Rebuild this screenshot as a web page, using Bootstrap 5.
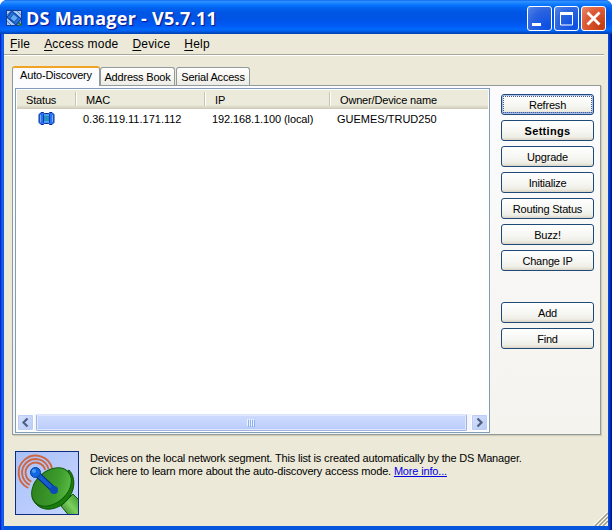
<!DOCTYPE html>
<html lang="en">
<head>
<meta charset="utf-8">
<title>DS Manager - V5.7.11</title>
<link href="https://cdn.jsdelivr.net/npm/bootstrap@5.3.0/dist/css/bootstrap.min.css" rel="stylesheet">
<style>
html,body{height:530px;overflow:hidden}
body{font:11px/13px "Liberation Sans",Arial,sans-serif;letter-spacing:-.165px;color:#000;background:#fff}
.win{width:612px;height:530px;border-radius:7px 7px 0 0;padding:0 4px 4px;
 background:linear-gradient(90deg,#0019cf 0,#0831d9 1px,#166aee 2px,#0855dd 4px,#0855dd 608px,#0441d8 609px,#001ea0 611px,#00138c)}
.titlebar{height:34px;margin:0 -4px;padding:2px 6px 0 6px;border-radius:7px 7px 0 0;background:linear-gradient(#0058ee 0,#3593ff 1px,#288eff 2px,#127dff 4px,#036ffc 6px,#0262ee 8px,#0057e5 12px,#0054e3 18px,#0055eb 21px,#005bf5 26px,#026afe 29px,#0062ef 31px,#0052d6 32px,#0040ab 34px)}
.caption{font:bold 18px/32px "Open Sans",sans-serif;letter-spacing:.27px;color:#fff;text-shadow:1px 1px 1px #0f1089;white-space:nowrap;margin-left:4px}
.ctl{width:25px;height:25px;padding:0;border:1px solid #fff;border-radius:3px;background:radial-gradient(circle at 85% 85%,#0a4fe4 0,#2b63e0 60%,#4479e4 85%,#8fb0f2 120%)}
.ctl-close{background:radial-gradient(circle at 85% 85%,#c43b12 0,#dc5a35 60%,#e4785a 85%,#f5b49c 120%)}
.ctl svg,.glyph{display:block}
.client{height:492px;background:#ece9d8;overflow:hidden}
.menu{height:20px;padding-left:6px;gap:14px;font-size:12px;line-height:20px;letter-spacing:.2px}
.rule{height:2px;margin-right:4px;border-top:1px solid #aca899;background:#fff}
.tabs{height:19px;margin:10px 0 0 8px;align-items:flex-end}
.tabx{border:1px solid #919b9c;border-bottom:0;border-radius:3px 3px 0 0;background:linear-gradient(#fff,#f5f4ee 60%,#ecebe6);height:18px;line-height:19px;letter-spacing:-.2px;text-align:center;white-space:nowrap}
.tab-on{width:88px;height:20px;line-height:15px;border-top:2px solid #f0a325;background:#fcfcfe;margin-bottom:-1px;position:relative;z-index:1}
.panel{width:589px;height:350px;margin-left:8px;padding:2px 6px 1px 2px;border:1px solid #919b9c;background:linear-gradient(#fcfcfe,#f4f3ee);box-shadow:1px 1px 1px #cfccb9}
.list{width:475px;height:345px;border:1px solid #7f9db9;background:#fff;padding:1px}
.cols{display:grid;grid-template-columns:59px 129px 125px 1fr}
.lhead{height:19px;line-height:20px;background:linear-gradient(#ebeadb 0,#ebeadb 15px,#e2dfcb 16px,#d6d2c2 18px,#cbc7b8 19px)}
.lhead span{padding-left:9px;border-left:1px solid #fff;box-shadow:-1px 0 #c7c5b2;height:14px;margin-top:2px;line-height:16px}
.lhead span:first-child{border:0;box-shadow:none}
.lrow{height:18px;line-height:20px;letter-spacing:0}
.sbar{height:17px;background:#f5f5fb}
.sbtn{width:17px;height:17px;border:1px solid #fff;border-radius:2px;background:linear-gradient(135deg,#d5e0fd,#b9cbf5);box-shadow:inset 0 0 0 1px #bccdf8}
.thumb{height:17px;margin:0 4px 0 2px;border:1px solid #9fb5e0;border-top-color:#dbe4fc;border-radius:2px;background:linear-gradient(#cddafd,#c1d2fc 70%,#b5c8f6);box-shadow:inset 0 0 0 1px #dfe8ff}
.side{width:93px;padding-top:6px;gap:5px}
.xpb{display:block;height:21px;width:93px;padding:0;border:1px solid #1f4a78;border-radius:3px;background:linear-gradient(#fff,#f5f5f1 60%,#eeede5 85%,#d9d3c6);color:#000;font-size:11px;line-height:20px;letter-spacing:-.2px;text-align:center}
.xpb:hover{color:#000}
.xpb-focus{box-shadow:inset 0 0 0 1px #a9bff0,inset 0 -2px #8aa5e5;position:relative}
.xpb-focus::after{content:"";position:absolute;inset:1px;border:1px dotted #4a5b8c}
.info{padding:16px 0 0 11px;gap:11px}
.more{color:#0000e0;text-decoration:underline}
.grip{position:absolute;right:4px;bottom:4px}
u{text-underline-offset:2px}
</style>
</head>
<body>
<div class="win position-relative">
 <div class="titlebar d-flex align-items-center">
  <svg width="16" height="17" viewBox="0 0 16 17"><rect width="15" height="15" x=".5" y=".5" fill="#a9cbf8" stroke="#143f94"/><path d="M1 5l4-4M11 15l4-4M11 1l4 4M1 11l4 4" stroke="#4c83d8" fill="none"/><g transform="rotate(40 8 8)"><rect x="2" y="4" width="12" height="8" rx="1" fill="#2375e2" stroke="#063a9f"/><rect x="5" y="5" width="6" height="6" fill="#65adf2" stroke="#1d59bd"/></g><path d="M13 16l-1-3 2-1 2 4z" fill="#1c7c34"/></svg>
  <span class="caption me-auto">DS Manager - V5.7.11</span>
  <div class="d-flex" style="gap:2px">
   <button class="ctl" aria-label="Minimize"><svg width="23" height="23"><path d="M4 17.500h9" stroke="#fff" stroke-width="3"/></svg></button>
   <button class="ctl" aria-label="Maximize"><svg width="23" height="23"><path d="M5.500 6v12h12V6" fill="none" stroke="#fff"/><path d="M5 6.500h13" stroke="#fff" stroke-width="3"/></svg></button>
   <button class="ctl ctl-close" aria-label="Close"><svg width="23" height="23"><path d="M5.500 5.500l12 12M17.500 5.500l-12 12" stroke="#fff" stroke-width="2.800"/></svg></button>
  </div>
 </div>
 <div class="client">
  <nav class="menu d-flex"><span><u>F</u>ile</span><span><u>A</u>ccess mode</span><span><u>D</u>evice</span><span><u>H</u>elp</span></nav>
  <div class="rule"></div>
  <div class="tabs d-flex">
   <div class="tabx tab-on">Auto-Discovery</div>
   <div class="tabx" style="width:75px">Address Book</div>
   <div class="tabx" style="width:74px;margin-left:1px">Serial Access</div>
  </div>
  <div class="panel d-flex justify-content-between">
   <div class="list d-flex flex-column">
    <div class="lhead cols"><span>Status</span><span>MAC</span><span>IP</span><span>Owner/Device name</span></div>
    <div class="lrow cols">
     <div><svg class="glyph" style="margin:3px 0 0 21px" width="17" height="13" viewBox="0 0 17 13"><path d="M3 .5h2.500l1 1h4l1-1H14l2 2v8l-2 2h-2.500l-1-1h-4l-1 1H3l-2-2v-8z" fill="#2c72ee" stroke="#0a2e9c"/><path d="M2.500 3v7M14.500 3v7" stroke="#6cb0ff"/><path d="M5.500 2v9M11.500 2v9" stroke="#0b3fbe"/><path d="M6.500 4h4v5h-4z" fill="#2298b8"/><path d="M6 3h5M6 10h5" stroke="#74c8f5"/></svg></div>
     <div style="padding-left:7px">0.36.119.11.171.112</div>
     <div style="padding-left:7px;letter-spacing:-.1px">192.168.1.100 (local)</div>
     <div style="padding-left:7px">GUEMES/TRUD250</div>
    </div>
    <div class="sbar mt-auto d-flex">
     <div class="sbtn"><svg class="glyph" width="15" height="15"><path d="M9.500 3.500l-4 4 4 4" fill="none" stroke="#4d6185" stroke-width="2.200"/></svg></div>
     <div class="thumb flex-grow-1 d-flex justify-content-center align-items-center"><svg width="9" height="8"><path d="M.5 0v7M2.500 0v7M4.500 0v7M6.500 0v7" stroke="#eef4fe"/><path d="M1.500 1v7M3.500 1v7M5.500 1v7M7.500 1v7" stroke="#8cb0f8"/></svg></div>
     <div class="sbtn"><svg class="glyph" width="15" height="15"><path d="M5.500 3.500l4 4-4 4" fill="none" stroke="#4d6185" stroke-width="2.200"/></svg></div>
    </div>
   </div>
   <div class="side d-flex flex-column">
    <button class="xpb xpb-focus">Refresh</button>
    <button class="xpb fw-bold" style="letter-spacing:.3px">Settings</button>
    <button class="xpb">Upgrade</button>
    <button class="xpb">Initialize</button>
    <button class="xpb">Routing Status</button>
    <button class="xpb">Buzz!</button>
    <button class="xpb">Change IP</button>
    <button class="xpb" style="margin-top:26px">Add</button>
    <button class="xpb">Find</button>
   </div>
  </div>
  <div class="info d-flex">
   <svg width="64" height="64" viewBox="0 0 64 64">
    <defs>
     <linearGradient id="sky" x1="0" y1="0" x2="1" y2="1"><stop offset="0" stop-color="#a9c0f8"/><stop offset="1" stop-color="#c6d6ff"/></linearGradient>
     <linearGradient id="dish" x1="0" y1="0" x2="1" y2="1"><stop offset="0" stop-color="#2c7a1c"/><stop offset=".6" stop-color="#3c9c2c"/><stop offset="1" stop-color="#6cc850"/></linearGradient>
     <linearGradient id="stem" x1="0" y1="1" x2="1" y2="0"><stop offset="0" stop-color="#1c6c14"/><stop offset=".5" stop-color="#7cd060"/><stop offset="1" stop-color="#2c8c1c"/></linearGradient>
     <clipPath id="box"><rect x="1" y="1" width="62" height="62"/></clipPath>
    </defs>
    <rect x=".5" y=".5" width="63" height="63" fill="url(#sky)" stroke="#0c2c84"/>
    <g clip-path="url(#box)">
     <g fill="none" stroke="#cf6640" stroke-width="1.900"><path d="M16.300 30.600A10 10 0 1 1 30.200 18.900"/><path d="M14.800 33.800A13.500 13.500 0 1 1 33.600 18"/><path d="M13.300 37A17 17 0 1 1 37 17.100"/></g>
     <path d="M46 55l12-12 8 8v16H56z" fill="url(#stem)" stroke="#14580c"/>
     <path d="M54 19C62 27 60 44 48 53 37 61 23 60 18 48z" fill="#187e0c" stroke="#0c4c06"/>
     <ellipse cx="36.500" cy="36" rx="22.500" ry="16" transform="rotate(-42 36.500 36)" fill="url(#dish)" stroke="#0f5c0a"/>
     <path d="M22 23L39 39" stroke="#062b84" stroke-width="6" stroke-linecap="round"/><path d="M22 23L39 39" stroke="#125fd0" stroke-width="4" stroke-linecap="round"/>
     <circle cx="39" cy="39" r="4" fill="#0b4bb8"/>
     <circle cx="20.500" cy="21.500" r="5" fill="#1068e0" stroke="#0a3ea0"/><circle cx="19" cy="20" r="2" fill="#4c9cf8"/>
    </g>
   </svg>
   <div style="padding-top:1px">Devices on the local network segment. This list is created automatically by the DS Manager.<br>Click here to learn more about the auto-discovery access mode. <a class="more" href="#">More info...</a></div>
  </div>
 </div>
 <svg class="grip" width="14" height="14"><path d="M1 14L14 1M5 14L14 5M9 14L14 9" stroke="#9c9884" stroke-width="1.400"/><path d="M0 13L13 0M3 14L14 3M7 14L14 7M11 14L14 11" stroke="#fff" stroke-width="1"/></svg>
</div>
</body>
</html>
